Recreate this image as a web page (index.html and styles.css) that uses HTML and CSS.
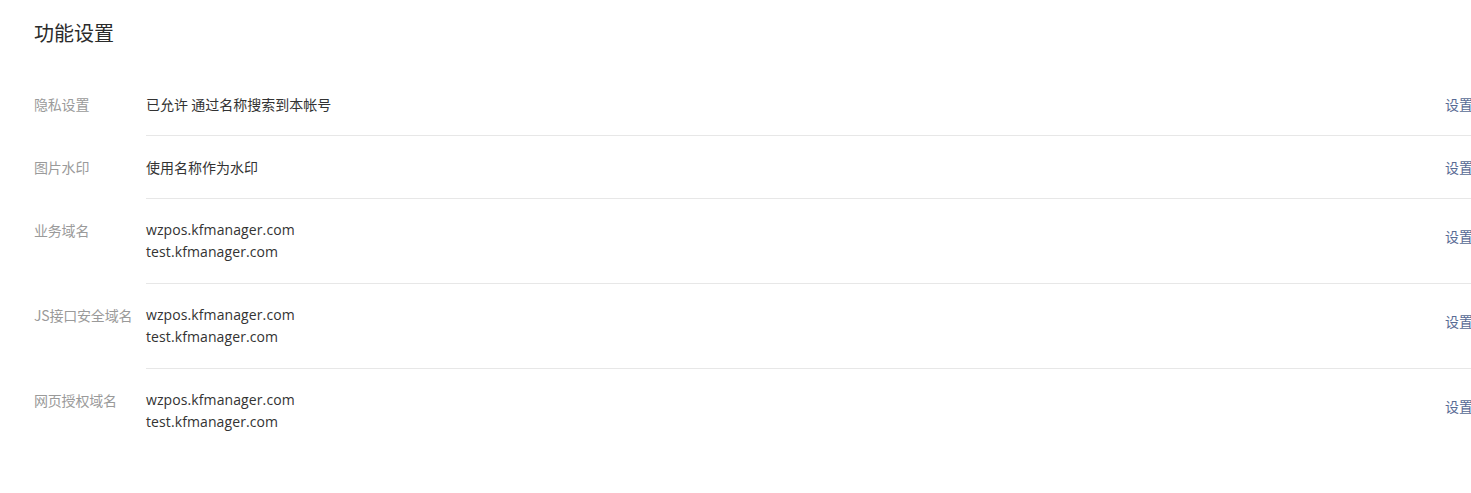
FILE: index.html
```html
<!DOCTYPE html>
<html lang="zh-CN">
<head>
<meta charset="utf-8">
<title>功能设置</title>
<link rel="stylesheet" href="styles.css">
</head>
<body>
<div class="page">
  <h2 class="title">功能设置</h2>
  <div class="list">
    <div class="row">
      <div class="label">隐私设置</div>
      <div class="body">
        <div class="value">已允许 通过名称搜索到本帐号</div>
        <a class="action" href="#">设置</a>
      </div>
    </div>
    <div class="row">
      <div class="label">图片水印</div>
      <div class="body">
        <div class="value">使用名称作为水印</div>
        <a class="action" href="#">设置</a>
      </div>
    </div>
    <div class="row multi">
      <div class="label">业务域名</div>
      <div class="body">
        <div class="value domain">wzpos.kfmanager.com<br>test.kfmanager.com</div>
        <a class="action" href="#">设置</a>
      </div>
    </div>
    <div class="row multi">
      <div class="label">JS接口安全域名</div>
      <div class="body">
        <div class="value domain">wzpos.kfmanager.com<br>test.kfmanager.com</div>
        <a class="action" href="#">设置</a>
      </div>
    </div>
    <div class="row multi last">
      <div class="label">网页授权域名</div>
      <div class="body">
        <div class="value domain">wzpos.kfmanager.com<br>test.kfmanager.com</div>
        <a class="action" href="#">设置</a>
      </div>
    </div>
  </div>
</div>
</body>
</html>
```
FILE: styles.css
```css
html, body {
  margin: 0;
  padding: 0;
  background: #fff;
  overflow: hidden;
}
body {
  font-family: "Microsoft YaHei", "Noto Sans CJK SC", "Noto Sans", sans-serif;
  font-size: 14px;
  color: #333;
}
.page {
  padding: 19px 0 0 34px;
}
.title {
  margin: 0;
  font-size: 20px;
  font-weight: normal;
  line-height: 28px;
  color: #2b2b2b;
}
.list {
  margin-top: 26px;
  margin-right: -2px;
}
.row {
  display: flex;
}
.label {
  width: 112px;
  flex: none;
  padding: 20px 0;
  line-height: 22px;
  color: #9a9a9a;
  white-space: nowrap;
  letter-spacing: -0.2px;
}
.body {
  flex: 1;
  display: flex;
  align-items: flex-start;
  justify-content: space-between;
  padding: 20px 0;
  border-bottom: 1px solid #e7e7e7;
}
.row.last .body {
  border-bottom-color: transparent;
}
.value {
  line-height: 22px;
  color: #333;
}
.domain {
  font-family: "Open Sans", "Noto Sans", sans-serif;
  font-size: 14px;
  letter-spacing: 0.1px;
}
.action {
  color: #576b95;
  text-decoration: none;
  line-height: 22px;
}
.row.multi .action {
  margin-top: 6px;
}
```
